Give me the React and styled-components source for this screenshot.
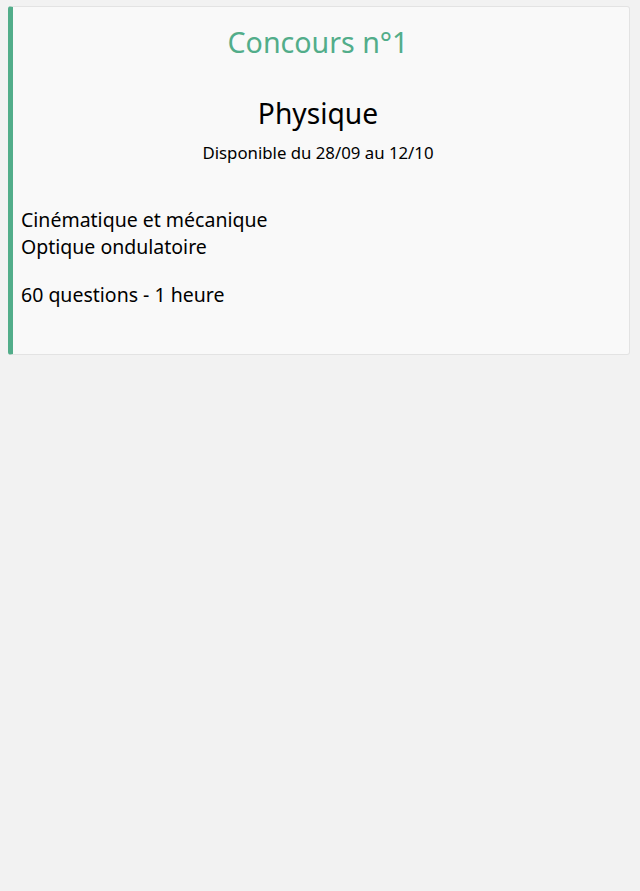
import styled, { createGlobalStyle } from "styled-components";

const GlobalStyle = createGlobalStyle`
  body {
    margin: 0;
    padding: 6px 10px 0 8px;
    background-color: #f2f2f2;
    font-family: "Noto Sans", "Open Sans", sans-serif;
    color: #000;
  }
`;

const Card = styled.div`
  background-color: #f9f9f9;
  border: 1px solid #e3e3e3;
  border-left: 5px solid #52ad8a;
  border-radius: 3px;
  padding: 9px 14px 46px 8px;
  display: flex;
  flex-direction: column;
`;

const Title = styled.div`
  text-align: center;
  color: #52ad8a;
  font-size: 28.6px;
  line-height: 52px;
`;

const Subject = styled.div`
  text-align: center;
  font-size: 28.2px;
  line-height: 40px;
  margin-top: 25px;
`;

const Dates = styled.div`
  text-align: center;
  font-size: 16.8px;
  line-height: 22px;
  margin-top: 9px;
`;

const Topics = styled.div`
  display: flex;
  flex-direction: column;
  margin-top: 42px;
  font-size: 19.5px;
  line-height: 27px;
`;

const Info = styled.div`
  font-size: 19.5px;
  line-height: 27px;
  margin-top: 21px;
`;

const App = () => {
  return (
    <>
      <GlobalStyle />
      <Card>
        <Title>Concours n°1</Title>
        <Subject>Physique</Subject>
        <Dates>Disponible du 28/09 au 12/10</Dates>
        <Topics>
          <span>Cinématique et mécanique</span>
          <span>Optique ondulatoire</span>
        </Topics>
        <Info>60 questions - 1 heure</Info>
      </Card>
    </>
  );
};

export default App;
